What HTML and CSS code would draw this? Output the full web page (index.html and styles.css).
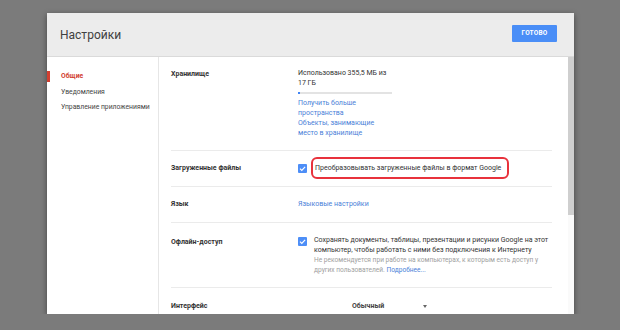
FILE: index.html
```html
<!DOCTYPE html>
<html lang="ru">
<head>
<meta charset="utf-8">
<link rel="stylesheet" href="styles.css">
</head>
<body>
<div class="dialog">
  <div class="header">
    <div class="title">Настройки</div>
    <button class="done">ГОТОВО</button>
  </div>
  <div class="body">
    <nav class="nav">
      <div class="nav-item active">Общие</div>
      <div class="nav-item">Уведомления</div>
      <div class="nav-item">Управление приложениями</div>
    </nav>
    <div class="content">
      <div class="row row-storage">
        <div class="label">Хранилище</div>
        <div class="value storage">
          <div class="used">Использовано 355,5 МБ из 17 ГБ</div>
          <div class="bar"><div class="bar-fill" style="width:2px"></div></div>
          <a class="link">Получить больше пространства</a>
          <a class="link">Объекты, занимающие место в хранилище</a>
        </div>
      </div>
      <div class="row row-convert">
        <div class="label">Загруженные файлы</div>
        <div class="value check-row">
          <span class="checkbox"><svg viewBox="0 0 10 10" width="9" height="9"><path d="M2.2 5.2 L4.2 7.1 L7.9 3.1" fill="none" stroke="#fff" stroke-width="1.3"/></svg></span>
          <span class="highlight">Преобразовывать загруженные файлы в формат Google</span>
        </div>
      </div>
      <div class="row row-lang">
        <div class="label">Язык</div>
        <div class="value"><a class="link">Языковые настройки</a></div>
      </div>
      <div class="row row-offline">
        <div class="label label-offline">Офлайн-доступ</div>
        <div class="value check-row top">
          <span class="checkbox cb-offline"><svg viewBox="0 0 10 10" width="9" height="9"><path d="M2.2 5.2 L4.2 7.1 L7.9 3.1" fill="none" stroke="#fff" stroke-width="1.3"/></svg></span>
          <div class="offline-text">
            <div>Сохранять документы, таблицы, презентации и рисунки Google на этот компьютер, чтобы работать с ними без подключения к Интернету</div>
            <div class="note">Не рекомендуется при работе на компьютерах, к которым есть доступ у других пользователей. <a class="link">Подробнее...</a></div>
          </div>
        </div>
      </div>
      <div class="row row-ui">
        <div class="label">Интерфейс</div>
        <div class="value">
          <div class="select"><span>Обычный</span><span class="arrow"></span></div>
        </div>
      </div>
    </div>
    <div class="scrollbar"><div class="thumb"></div></div>
  </div>
</div>
</body>
</html>
```
FILE: styles.css
```css
html, body {
  margin: 0;
  padding: 0;
  background: #7b7b7b;
  font-family: Roboto, "Liberation Sans", Arial, sans-serif;
  color: #333;
}
.dialog {
  margin: 13px 0 0 47px;
  width: 527px;
  height: 301px;
  background: #fff;
  box-shadow: 0 2px 6px rgba(0,0,0,0.45);
  display: flex;
  flex-direction: column;
  overflow: hidden;
}
.header {
  height: 43px;
  flex: none;
  background: #ececec;
  border-bottom: 1px solid #dadada;
  display: flex;
  align-items: center;
  justify-content: space-between;
  padding: 0 17px 0 13px;
}
.title {
  font-size: 12px;
  color: #404040;
  margin-top: 1px;
}
.done {
  width: 45px;
  height: 17px;
  border: 0;
  border-radius: 1px;
  background: #4a8ef7;
  color: #fff;
  font-family: Roboto, "Liberation Sans", sans-serif;
  font-size: 6.5px;
  font-weight: bold;
  letter-spacing: 0.2px;
  padding: 0;
  margin-top: -3px;
}
.body {
  flex: 1;
  display: flex;
  min-height: 0;
}
.nav {
  width: 111px;
  flex: none;
  border-right: 1px solid #e6e6e6;
  padding-top: 14px;
  font-size: 6.8px;
}
.nav-item {
  line-height: 11px;
  padding-left: 11px;
  border-left: 3px solid transparent;
  margin-bottom: 4.5px;
  color: #444;
  white-space: nowrap;
}
.nav-item.active {
  border-left-color: #d23f31;
  color: #d23f31;
  font-weight: bold;
}
.content {
  flex: 1;
  padding: 0 16px 0 12px;
  font-size: 7px;
  line-height: 10px;
}
.row {
  display: flex;
  border-bottom: 1px solid #ebebeb;
}
.label {
  width: 127px;
  flex: none;
  font-weight: bold;
  color: #333;
}
.value {
  flex: 1;
  color: #333;
}
.row-storage { padding: 12px 0; }
.storage { width: 95px; flex: none; }
.used { line-height: 9.5px; }
.bar {
  width: 94px;
  height: 2px;
  background: #e3e3e3;
  margin: 4px 0 4px;
}
.bar-fill { height: 2px; background: #4285f4; }
.link {
  display: block;
  color: #4a7fd8;
  text-decoration: none;
}
.row-convert {
  padding: 6px 0 7px;
  align-items: center;
}
.check-row {
  display: flex;
  align-items: center;
}
.check-row.top { align-items: flex-start; }
.checkbox {
  width: 9px;
  height: 9px;
  background: #4d8ef7;
  border-radius: 1px;
  flex: none;
  display: flex;
  align-items: center;
  justify-content: center;
}
.highlight {
  margin-left: 4px;
  border: 2px solid #e8323c;
  border-radius: 6px;
  padding: 4px 6px 4px 2px;
  line-height: 10px;
  white-space: nowrap;
}
.row-lang { padding: 12px 0 13px; }
.row-offline { padding: 12px 0; }
.label-offline { margin-top: 2px; }
.cb-offline { margin-top: 2px; }
.offline-text { margin-left: 7px; }
.note {
  color: #a0a0a0;
  font-size: 6.6px;
}
.note .link { display: inline; }
.row-ui { padding: 13px 0; border-bottom: 0; }
.select {
  margin-left: 54px;
  width: 75px;
  display: flex;
  justify-content: space-between;
  align-items: center;
  font-weight: bold;
  color: #444;
}
.arrow {
  width: 0;
  height: 0;
  border-left: 2.5px solid transparent;
  border-right: 2.5px solid transparent;
  border-top: 3px solid #666;
}
.scrollbar {
  width: 6px;
  flex: none;
  background: #fafafa;
}
.thumb {
  height: 158px;
  background: #cfcfcf;
}
```
